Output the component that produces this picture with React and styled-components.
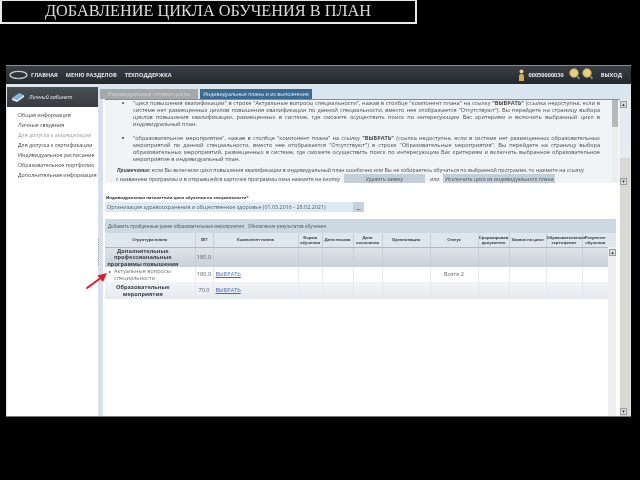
import React from 'react';
import styled, { createGlobalStyle } from 'styled-components';

const GlobalStyle = createGlobalStyle`
  html, body { margin: 0; padding: 0; background: #000; }
  * { box-sizing: border-box; }
`;

const Page = styled.div`
  width: 640px;
  height: 480px;
  overflow: hidden;
  background: #000;
  display: flex;
  flex-direction: column;
  align-items: flex-start;
`;

const TitleBox = styled.h1`
  width: 417px;
  height: 24px;
  margin: 0;
  background: #000;
  border: 2px solid #e8e8e8;
  border-top-width: 1px;
  color: #dcdcdc;
  font: 400 16.3px/20px "Liberation Serif", serif;
  text-align: center;
  white-space: nowrap;
  padding-right: 1px;
  filter: blur(0.3px);
`;

const Window = styled.div`
  width: 625px;
  height: 352px;
  margin: 41px 0 0 6px;
  background: #dbe5ee;
  border-top: 1px solid #8a8f92;
  border-bottom: 1px solid #777;
  display: flex;
  flex-direction: column;
  filter: blur(0.45px);
`;

const TopBar = styled.div`
  height: 18px;
  flex: none;
  background: linear-gradient(#3a4045, #24292d);
  display: flex;
  align-items: center;
  padding: 0 9px 0 3px;
  color: #e6e8ea;
  font: 700 5.6px/8px "Open Sans", sans-serif;
`;

const TopLink = styled.span`
  margin-left: ${p => p.$gap}px;
  white-space: nowrap;
`;

const Spacer = styled.div`
  flex: 1;
`;

const Body = styled.div`
  flex: 1;
  min-height: 0;
  display: flex;
  padding-top: 3px;
`;

const Sidebar = styled.aside`
  width: 91px;
  flex: none;
  margin-left: 1px;
  background: #fff;
  display: flex;
  flex-direction: column;
`;

const SideHead = styled.div`
  height: 20px;
  flex: none;
  background: linear-gradient(#4a4e52, #383c40);
  display: flex;
  align-items: center;
  gap: 4px;
  padding-left: 4px;
  color: #e8eaec;
  font: italic 400 5.4px/8px "Open Sans", sans-serif;
`;

const SideList = styled.ul`
  list-style: none;
  margin: 0;
  padding: 3px 0 0 11px;
  font: 400 5.3px/10px "Open Sans", sans-serif;
  white-space: nowrap;
`;

const SideItem = styled.li`
  color: ${p => (p.$off ? '#9a9a9a' : '#444')};
`;

const Splitter = styled.div`
  width: 8px;
  flex: none;
  display: flex;
  align-items: center;
  background: linear-gradient(90deg, #d9dfee 0 5px, #fff 5px);
`;

const Grip = styled.div`
  width: 1px;
  height: 26px;
  border-left: 1px dotted #9aa4b4;
`;

const Main = styled.main`
  flex: 1;
  min-width: 0;
  display: flex;
  flex-direction: column;
  margin-left: -6px;
  position: relative;
`;

const Tabs = styled.div`
  height: 12px;
  flex: none;
  display: flex;
  align-items: flex-end;
  gap: 2px;
  background: #dbe5ee;
`;

const Tab = styled.div`
  width: ${p => p.$w}px;
  height: 10px;
  background: ${p => (p.$active ? '#3d6a90' : '#a5a8aa')};
  color: ${p => (p.$active ? '#e8eff5' : '#d4d6d8')};
  font: 400 5.1px/10px "Open Sans", sans-serif;
  text-align: center;
  white-space: nowrap;
  overflow: hidden;
`;

const MainRow = styled.div`
  flex: 1;
  min-height: 0;
  display: flex;
  padding-left: 5px;
`;

const Work = styled.div`
  width: 515px;
  flex: none;
  display: flex;
  flex-direction: column;
  background: #fff;
`;

const Panel = styled.div`
  height: 84px;
  flex: none;
  display: flex;
  background: #f1f4f7;
  border-top: 1px solid #7f8f9c;
`;

const PanelText = styled.div`
  width: 507px;
  flex: none;
  overflow: hidden;
  padding: 0 12px 0 8px;
  color: #4a4a4a;
  font: 400 5.6px/7px "Open Sans", sans-serif;
`;

const Bullets = styled.ul`
  margin: 0;
  padding: 0 0 0 20px;
`;

const Bullet = styled.li`
  text-align: justify;
  margin-bottom: ${p => p.$after}px;
`;

const Note = styled.p`
  margin: 0;
  padding-left: 4px;
  font-size: 5.15px;
  line-height: 8px;
  white-space: nowrap;
`;

const NoteLine = styled.div`
  display: flex;
  align-items: center;
  height: 10px;
  padding-left: 3px;
  font-size: 5.15px;
  white-space: nowrap;
`;

const PlainButton = styled.span`
  display: block;
  height: 10px;
  flex: none;
  width: ${p => p.$w}px;
  margin-left: ${p => p.$left}px;
  background: #c2ced8;
  color: #4a5560;
  text-align: center;
  line-height: 10px;
  font-size: 5px;
`;

const OrWord = styled.span`
  margin-left: 5px;
`;

const PanelThumb = styled.div`
  width: 6px;
  background: linear-gradient(#b6b8ba 0 27px, #eceef0 27px);
`;

const Rail = styled.div`
  width: 10px;
  flex: none;
  display: flex;
  flex-direction: column;
  align-items: flex-start;
  padding: 2px 0 1px;
  background: linear-gradient(#e5ebf0 0 59px, #d9d9d4 59px);
`;

const ScrollBtn = styled.div`
  width: 7px;
  height: 7px;
  flex: none;
  margin-top: ${p => p.$top || '0'};
  background: #d8dadc;
  border: 1px solid #9a9c9e;
  color: #333;
  font: 400 5px/5px "DejaVu Sans", sans-serif;
  text-align: center;
`;

const FieldLabel = styled.div`
  margin: 11px 0 0 0;
  padding-left: 1px;
  height: 8px;
  color: #333;
  font: 700 4.1px/8px "Open Sans", sans-serif;
`;

const FieldRow = styled.div`
  display: flex;
  height: 10px;
  width: 259px;
  flex: none;
`;

const Field = styled.div`
  flex: 1;
  background: #dfe9f2;
  color: #56616b;
  font: 400 5.4px/10px "Open Sans", sans-serif;
  padding-left: 2px;
  white-space: nowrap;
  overflow: hidden;
`;

const DotsButton = styled.div`
  width: 11px;
  background: #c8d2dc;
  color: #333;
  font: 700 5px/12px "Open Sans", sans-serif;
  text-align: center;
`;

const TableBlock = styled.section`
  position: relative;
  flex: 1;
  width: 511px;
  margin-top: 7px;
  background: linear-gradient(#eeeeec, #eeeeec) right 0 / 8px 100% no-repeat, #fff;
`;

const Toolbar = styled.div`
  height: 14px;
  background: #ccd8e2;
  color: #47525c;
  font: 400 4.5px/14px "Open Sans", sans-serif;
  padding-left: 3px;
  white-space: nowrap;
`;

const ToolLink = styled.span`
  margin-right: 4px;
`;

const PlanTable = styled.table`
  width: 511px;
  table-layout: fixed;
  border-collapse: collapse;
  font-family: "Open Sans", sans-serif;
`;

const HeadCell = styled.th`
  height: 14px;
  padding: 0;
  background: #dfe7ee;
  border-left: 1px solid #c6d0d9;
  border-bottom: 1px solid #aeb8c1;
  color: #3f4750;
  font: 700 4.1px/5px "Open Sans", sans-serif;
  letter-spacing: -0.08px;
  text-align: center;
  &:first-child { border-left: 0; }
`;

const BlankHead = styled.th`
  padding: 0;
  background: #dfe7ee;
`;

const PlanRow = styled.tr`
  height: ${p => p.$h}px;
  background: ${p => (p.$section ? p.$bg : '#fff')};
`;

const PlanCell = styled.td`
  padding: 0 0 0 ${p => (p.$start ? 2 : 0)}px;
  border-left: 1px solid ${p => (p.$light ? '#e6e9ec' : '#c8d1d9')};
  color: #5a6168;
  font: 400 5.6px/7px "Open Sans", sans-serif;
  text-align: ${p => (p.$start ? 'left' : 'center')};
  overflow: hidden;
  &:first-child { border-left: 0; }
`;

const SectionName = styled.td`
  padding: 0 14px 0 0;
  color: #3b4249;
  font: 700 5.6px/6.6px "Open Sans", sans-serif;
  text-align: center;
  overflow: hidden;
`;

const ItemName = styled.td`
  padding: 0 0 0 9px;
  position: relative;
  color: #6a7077;
  font: 400 5.5px/7px "Open Sans", sans-serif;
  &::before {
    content: '';
    position: absolute;
    left: 4px;
    top: 4px;
    width: 0;
    height: 0;
    border-left: 2px solid #333;
    border-top: 1.5px solid transparent;
    border-bottom: 1.5px solid transparent;
  }
`;

const SelectLink = styled.a`
  color: #4a66b8;
  text-decoration: underline;
`;

const ScrollCell = styled.td`
  padding: 2px 0 0 1px;
  vertical-align: top;
  background: #eeeeec;
`;

const ArrowMark = styled.svg`
  position: absolute;
  left: -20px;
  top: 53px;
`;

const columns = [90, 18, 85, 24, 31, 29, 48, 48, 31, 37, 36, 26, 8];
const headers = [
  'Структура плана', 'ЗЕТ', 'Компонент плана', 'Форма обучения', 'Дата начала',
  'Дата окончания', 'Организация', 'Статус', 'Сформировав документы',
  'Заявка на цикл', 'Образовательный сертификат', 'Результат обучения',
];
const sideItems = [
  { text: 'Общая информация' },
  { text: 'Личные сведения' },
  { text: 'Для допуска к аккредитации', off: true },
  { text: 'Для допуска к сертификации' },
  { text: 'Индивидуальное расписание' },
  { text: 'Образовательное портфолио' },
  { text: 'Дополнительная информация' },
];

function Logo() {
  return (
    <svg width="19" height="10" viewBox="0 0 19 10">
      <ellipse cx="9.5" cy="5" rx="8.5" ry="3.6" fill="none" stroke="#c9ced2" strokeWidth="1.4" />
      <path d="M3 7 Q9 9.5 16 7" fill="none" stroke="#8b9196" strokeWidth="1" />
    </svg>
  );
}

function Person() {
  return (
    <svg width="7" height="13" viewBox="0 0 7 13">
      <circle cx="3.5" cy="2.5" r="2" fill="#e9cf94" />
      <path d="M1 12 V7 Q1 5 3.5 5 Q6 5 6 7 V12 Z" fill="#d8a94e" />
    </svg>
  );
}

function Magnifier() {
  return (
    <svg width="11" height="12" viewBox="0 0 11 12">
      <circle cx="5" cy="5" r="4.2" fill="#e6d089" stroke="#c7a84f" strokeWidth="1" />
      <path d="M8 8 L10.5 11" stroke="#7f9a8a" strokeWidth="1.6" />
    </svg>
  );
}

function BookIcon() {
  return (
    <svg width="14" height="11" viewBox="0 0 14 11">
      <path d="M1 6 L8 1 L13 3 L6 8 Z" fill="#7fb6e0" />
      <path d="M1 6 L6 8 L13 3 L13 5 L6 10 L1 8 Z" fill="#e6eef5" />
    </svg>
  );
}

export default function App() {
  return (
    <Page>
      <GlobalStyle />
      <TitleBox>ДОБАВЛЕНИЕ ЦИКЛА ОБУЧЕНИЯ В ПЛАН</TitleBox>
      <Window>
        <TopBar>
          <Logo />
          <TopLink $gap={3}>ГЛАВНАЯ</TopLink>
          <TopLink $gap={8}>МЕНЮ РАЗДЕЛОВ</TopLink>
          <TopLink $gap={8}>ТЕХПОДДЕРЖКА</TopLink>
          <Spacer />
          <Person />
          <TopLink $gap={4}>00050000030</TopLink>
          <TopLink $gap={5}><Magnifier /></TopLink>
          <TopLink $gap={2}><Magnifier /></TopLink>
          <TopLink $gap={8}>ВЫХОД</TopLink>
        </TopBar>
        <Body>
          <Sidebar>
            <SideHead><BookIcon />Личный кабинет</SideHead>
            <SideList>
              {sideItems.map(item => (
                <SideItem key={item.text} $off={item.off}>{item.text}</SideItem>
              ))}
            </SideList>
          </Sidebar>
          <Splitter><Grip /></Splitter>
          <Main>
            <Tabs>
              <Tab $w={98}>Индивидуальные сетевые циклы</Tab>
              <Tab $w={112} $active>Индивидуальные планы и их выполнение</Tab>
            </Tabs>
            <MainRow>
              <Work>
                <Panel>
                  <PanelText>
                    <Bullets>
                      <Bullet $after={7}>
                        "цикл повышения квалификации" в строке "Актуальные вопросы специальности", нажав в столбце "компонент плана" на ссылку <b>"ВЫБРАТЬ"</b> (ссылка недоступна, если в системе нет размещенных циклов повышения квалификации по данной специальности, вместо нее отображается "Отсутствуют"). Вы перейдете на страницу выбора циклов повышения квалификации, размещенных в системе, где сможете осуществить поиск по интересующим Вас критериям и включить выбранный цикл в индивидуальный план.
                      </Bullet>
                      <Bullet $after={3}>
                        "образовательное мероприятие", нажав в столбце "компонент плана" на ссылку <b>"ВЫБРАТЬ"</b> (ссылка недоступна, если в системе нет размещенных образовательных мероприятий по данной специальности, вместо нее отображается "Отсутствуют") в строке "Образовательные мероприятия". Вы перейдете на страницу выбора образовательных мероприятий, размещенных в системе, где сможете осуществить поиск по интересующим Вас критериям и включить выбранное образовательное мероприятие в индивидуальный план.
                      </Bullet>
                    </Bullets>
                    <Note>
                      <b><i>Примечание:</i></b> если Вы включили цикл повышения квалификации в индивидуальный план ошибочно или Вы не собираетесь обучаться по выбранной программе, то нажмите на ссылку
                    </Note>
                    <NoteLine>
                      с названием программы и в открывшейся карточке программы окна нажмите на кнопку
                      <PlainButton $w={81} $left={4}>Удалить заявку</PlainButton>
                      <OrWord>или</OrWord>
                      <PlainButton $w={112} $left={4}>Исключить цикл из индивидуального плана</PlainButton>
                    </NoteLine>
                  </PanelText>
                  <PanelThumb />
                </Panel>
                <FieldLabel>Индивидуальный пятилетний цикл обучения по специальности*</FieldLabel>
                <FieldRow>
                  <Field>Организация здравоохранения и общественное здоровье (01.03.2016 - 28.02.2021)</Field>
                  <DotsButton>...</DotsButton>
                </FieldRow>
                <TableBlock>
                  <Toolbar>
                    <ToolLink>Добавить пройденные ранее образовательные мероприятия</ToolLink>
                    <ToolLink>Обновление результатов обучения</ToolLink>
                  </Toolbar>
                  <PlanTable>
                    <colgroup>
                      {columns.map((w, i) => <col key={i} width={w} />)}
                    </colgroup>
                    <thead>
                      <tr>
                        {headers.map(h => <HeadCell key={h}>{h}</HeadCell>)}
                        <BlankHead />
                      </tr>
                    </thead>
                    <tbody>
                      <PlanRow $h={20} $section $bg="linear-gradient(#dfe5ea, #c7d0d8)">
                        <SectionName>Дополнительные профессиональные программы повышения</SectionName>
                        <PlanCell>180.0</PlanCell>
                        {headers.slice(2).map(h => <PlanCell key={h} />)}
                        <ScrollCell><ScrollBtn>▴</ScrollBtn></ScrollCell>
                      </PlanRow>
                      <PlanRow $h={15}>
                        <ItemName>Актуальные вопросы специальности</ItemName>
                        <PlanCell $light>180.0</PlanCell>
                        <PlanCell $light $start><SelectLink>ВЫБРАТЬ</SelectLink></PlanCell>
                        {headers.slice(3).map(h => (
                          <PlanCell $light key={h}>{h === 'Статус' ? 'Всего 2' : ''}</PlanCell>
                        ))}
                        <ScrollCell />
                      </PlanRow>
                      <PlanRow $h={17} $section $bg="linear-gradient(#f2f4f6, #e6ebef)">
                        <SectionName>Образовательные мероприятия</SectionName>
                        <PlanCell $light>70.0</PlanCell>
                        <PlanCell $light $start><SelectLink>ВЫБРАТЬ</SelectLink></PlanCell>
                        {headers.slice(3).map(h => <PlanCell $light key={h} />)}
                        <ScrollCell />
                      </PlanRow>
                    </tbody>
                  </PlanTable>
                  <ArrowMark width="24" height="18" viewBox="0 0 24 18">
                    <path d="M2 16 L17 5" stroke="#d8202a" strokeWidth="2" strokeLinecap="round" />
                    <path d="M22 1 L12.5 3.5 L18 10 Z" fill="#d8202a" />
                  </ArrowMark>
                </TableBlock>
              </Work>
              <Rail>
                <ScrollBtn>▴</ScrollBtn>
                <ScrollBtn $top="70px">▾</ScrollBtn>
                <ScrollBtn $top="auto">▾</ScrollBtn>
              </Rail>
            </MainRow>
          </Main>
        </Body>
      </Window>
    </Page>
  );
}
